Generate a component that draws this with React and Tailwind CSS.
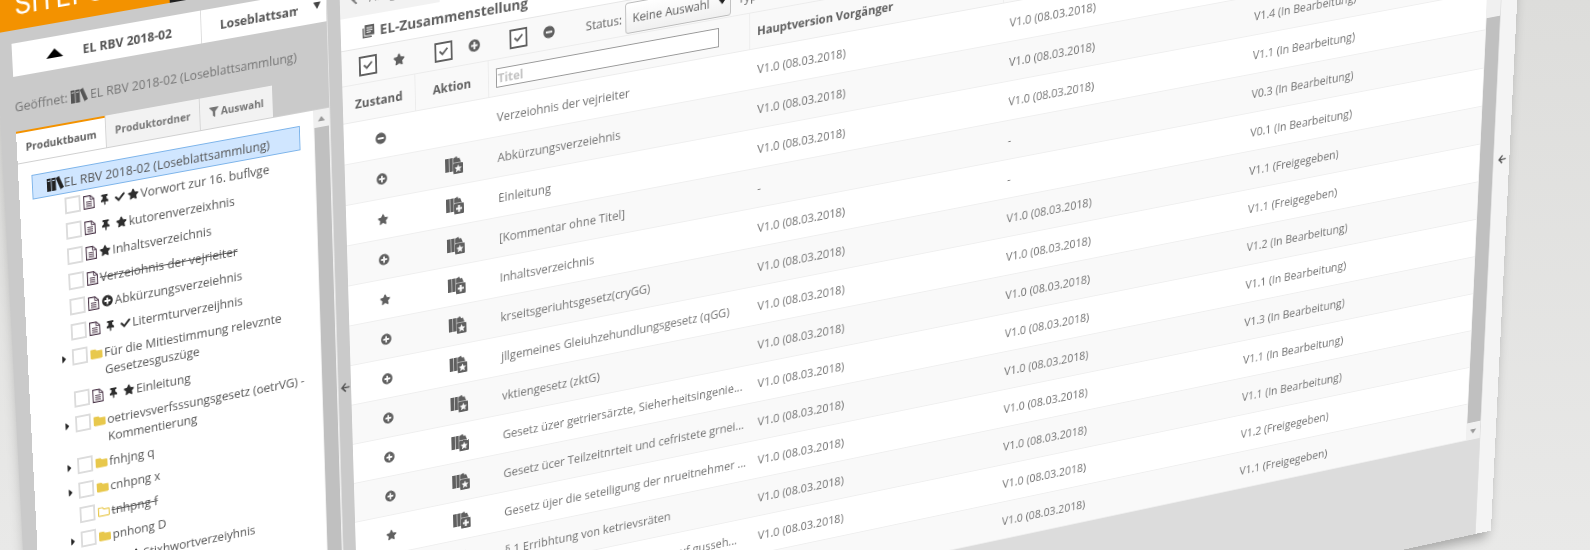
import { useState } from 'react';
import {
  FaArrowLeft,
  FaCaretRight,
  FaCheck,
  FaFilter,
  FaFolder,
  FaMinusCircle,
  FaPlusCircle,
  FaRegFolder,
  FaStar,
  FaThumbtack,
} from 'react-icons/fa';

const treeItems = [
  { icons: ['doc', 'pin', 'check', 'star'], text: 'Vorwort zur 16. buflvge' },
  { icons: ['doc', 'pin', 'star'], text: 'kutorenverzeixhnis' },
  { icons: ['doc', 'star'], text: 'Inhaltsverzeichnis' },
  { icons: ['doc'], text: 'Verzeiohnis der vejrieiter', removed: true },
  { icons: ['doc', 'plus'], text: 'Abkürzungsverzeiehnis' },
  { icons: ['doc', 'pin', 'check'], text: 'Litermturverzeijhnis' },
  { icons: ['folder'], text: 'Für die Mitiestimmung relevznte\nGesetzesguszüge', open: true },
  { icons: ['doc', 'pin', 'star'], text: 'Einleitung' },
  { icons: ['folder'], text: 'oetrievsverfsssungsgesetz (oetrVG) -\nKommentierung', open: true },
  { icons: ['folder'], text: 'fnhjng q', open: true },
  { icons: ['folder'], text: 'cnhpng x', open: true },
  { icons: ['emptyFolder'], text: 'tnhpng f', removed: true },
  { icons: ['folder'], text: 'pnhong D', open: true },
  { icons: ['doc', 'pin', 'star'], text: 'Stixhwortverzeiyhnis' },
];

const date = 'V1.0 (08.03.2018)';

const rows = [
  { state: 'minus', action: null, title: 'Verzeiohnis der vejrieiter', prev: date, main: date, current: 'V1.0 (In Bearbeitung)' },
  { state: 'plus', action: 'star', title: 'Abkürzungsverzeiehnis', prev: date, main: date, current: 'V1.4 (In Bearbeitung)' },
  { state: 'star', action: 'plus', title: 'Einleitung', prev: date, main: date, current: 'V1.1 (In Bearbeitung)' },
  { state: 'plus', action: 'star', title: '[Kommentar ohne Titel]', prev: '-', main: '-', current: 'V0.3 (In Bearbeitung)' },
  { state: 'star', action: 'plus', title: 'Inhaltsverzeichnis', prev: date, main: '-', current: 'V0.1 (In Bearbeitung)' },
  { state: 'plus', action: 'star', title: 'krseitsgeriuhtsgesetz(cryGG)', prev: date, main: date, current: 'V1.1 (Freigegeben)' },
  { state: 'plus', action: 'star', title: 'jllgemeines Gleiuhzehundlungsgesetz (qGG)', prev: date, main: date, current: 'V1.1 (Freigegeben)' },
  { state: 'plus', action: 'star', title: 'vktiengesetz (zktG)', prev: date, main: date, current: 'V1.2 (In Bearbeitung)' },
  { state: 'plus', action: 'star', title: 'Gesetz üzer getriersärzte, Sieherheitsingenie...', prev: date, main: date, current: 'V1.1 (In Bearbeitung)' },
  { state: 'plus', action: 'star', title: 'Gesetz ücer Teilzeitnrteit und cefristete grnei...', prev: date, main: date, current: 'V1.3 (In Bearbeitung)' },
  { state: 'star', action: 'plus', title: 'Gesetz üjer die seteiligung der nrueitnehmer ...', prev: date, main: date, current: 'V1.1 (In Bearbeitung)' },
  { state: 'plus', action: 'star', title: '§ 1 Erribhtung von ketrievsräten', prev: date, main: date, current: 'V1.1 (In Bearbeitung)' },
  { state: 'plus', action: 'star', title: '§ 2 Stellung der Gewerkschaften zuf gusseh...', prev: date, main: date, current: 'V1.2 (Freigegeben)' },
  { state: 'plus', action: 'star', title: '§ 3 Abweichende Regelungen', prev: date, main: date, current: 'V1.1 (Freigegeben)' },
];

const BooksIcon = ({ className }) => (
  <svg viewBox="0 0 18 14" className={className} fill="currentColor">
    <path fillRule="evenodd" d="M0 1h4.4v13H0zM.9 3v1h2.6V3z" />
    <path fillRule="evenodd" d="M5.2 1h4.4v13H5.2zM6.1 3v1h2.6V3z" />
    <path d="M9.8 1.8 13.2 0 18 12l-3.6 1.8z" />
  </svg>
);

const DocIcon = ({ className }) => (
  <svg viewBox="0 0 12 14" className={className} fill="none" stroke="currentColor">
    <path d="M.6.6h7l3.800 3.600v9.200H.6z" strokeWidth="1.1" />
    <path d="M7.400.6v3.800h4" strokeWidth="0.9" />
    <path d="M3 6.700h6M3 8.800h6M3 10.900h6" strokeWidth="1" />
  </svg>
);

// Books with a small badge in the lower right corner
const ActionIcon = ({ type }) => (
  <svg viewBox="0 0 20 18" className="h-[18px] w-5" fill="currentColor">
    <path d="M0 1h4v14H0zM4.600 1h4v14h-4z" />
    <path d="M9.200 1.500 13 0l1.200 2.300 1.800-.5 2 4.700H9.200z" />
    <path
      fillRule="evenodd"
      d={
        type === 'plus'
          ? 'M10 7h9a1 1 0 0 1 1 1v9a1 1 0 0 1-1 1h-9a1 1 0 0 1-1-1V8a1 1 0 0 1 1-1zm3.400 2v2.400H11v2.200h2.400V16h2.200v-2.400H18v-2.200h-2.400V9z'
          : 'M10 7h9a1 1 0 0 1 1 1v9a1 1 0 0 1-1 1h-9a1 1 0 0 1-1-1V8a1 1 0 0 1 1-1zm4.500 1.600-1.200 2.600-2.900.3 2.200 1.900-.7 2.800 2.600-1.500 2.600 1.500-.7-2.800 2.200-1.900-2.900-.3z'
      }
    />
  </svg>
);

const StateIcon = ({ type, className = 'size-3' }) => {
  if (type === 'plus') return <FaPlusCircle className={className} />;
  if (type === 'minus') return <FaMinusCircle className={className} />;
  return <FaStar className={className} />;
};

const TreeIcon = ({ type }) => {
  switch (type) {
    case 'doc':
      return <DocIcon className="h-[14px] w-3 text-[#4a3548]" />;
    case 'pin':
      return <FaThumbtack className="h-[11px] w-4" />;
    case 'check':
      return <FaCheck className="size-[11px]" />;
    case 'folder':
      return <FaFolder className="size-[13px] text-[#e8c84c]" />;
    case 'emptyFolder':
      return <FaRegFolder className="size-[13px] text-[#e8c84c]" />;
    default:
      return <StateIcon type={type} className="size-3" />;
  }
};

const TreeItem = ({ item }) => (
  <li className="flex py-1 pl-[37px] leading-[18px]">
    <span className="flex h-[18px] w-[11px] items-center">
      {item.open && <FaCaretRight className="h-3 w-[5px] text-[#222]" />}
    </span>
    <label className="flex gap-[2px]">
      <input
        type="checkbox"
        className="size-[17px] shrink-0 appearance-none border-2 border-[#dcdcdc] bg-white"
      />
      {item.icons.map((icon) => (
        <span key={icon} className="flex h-[18px] items-center pl-px text-[#2e2e2e]">
          <TreeIcon type={icon} />
        </span>
      ))}
      <span className={item.removed ? 'whitespace-pre line-through' : 'whitespace-pre'}>{item.text}</span>
    </label>
  </li>
);

const Sidebar = () => (
  <aside className="flex w-[355px] shrink-0 flex-col pt-[13px] pl-4">
    <div className="flex h-[33px] bg-white font-bold text-[#555]">
      <button type="button" className="flex w-[203px] items-center border-r border-[#ddd] pl-9">
        <svg viewBox="0 0 18 9" className="mr-[21px] h-[9px] w-[18px]" fill="#000">
          <path d="M9 0l9 9H0z" />
        </svg>
        EL RBV 2018-02
      </button>
      <div className="relative flex-1">
        <select aria-label="Produktart" className="ml-5 h-full w-[85px] appearance-none overflow-hidden text-clip">
          <option>Loseblattsammlung</option>
        </select>
        <svg viewBox="0 0 8 7" className="pointer-events-none absolute top-3 right-[6px] h-[7px] w-2" fill="#444">
          <path d="M0 0h8L4 7z" />
        </svg>
      </div>
    </div>

    <p className="flex h-[55px] items-center gap-[3px] pt-1 text-[#757575]">
      Geöffnet: <BooksIcon className="h-[14px] w-[18px] text-[#555]" /> EL RBV 2018-02 (Loseblattsammlung)
    </p>

    <div className="flex h-8 text-[11px] font-bold text-[#757575]">
      <button type="button" className="w-[95px] border-t-2 border-[#f39200] bg-white text-[#606060]">
        Produktbaum
      </button>
      <button type="button" className="w-[102px] border-l border-[#d5d5d5] bg-[#f2f2f2]">
        Produktordner
      </button>
      <button type="button" className="flex w-20 items-center justify-center gap-[3px] border-l border-[#d5d5d5] bg-[#f2f2f2]">
        <FaFilter className="size-[10px]" /> Auswahl
      </button>
    </div>

    <div className="flex flex-1 overflow-hidden border-t border-[#d0d0d0] bg-white">
      <div className="flex-1 pt-[13px] text-[#555]">
        <p className="mr-[15px] ml-[14px] flex h-[25px] items-center border border-[#7db4ea] bg-[#d0e6ff] pl-[15px]">
          <BooksIcon className="h-[14px] w-[18px] text-[#222]" />
          EL RBV 2018-02 (Loseblattsammlung)
        </p>
        <ul>
          {treeItems.map((item) => (
            <TreeItem key={item.text} item={item} />
          ))}
        </ul>
      </div>
      <div className="flex w-[18px] flex-col bg-[#f0f0f0]">
        <span className="flex h-[18px] items-center justify-center">
          <svg viewBox="0 0 8 5" className="h-[5px] w-2" fill="#9a9a9a">
            <path d="M4 0l4 5H0z" />
          </svg>
        </span>
        <span className="mx-px flex-1 bg-[#c0c0c0]" />
      </div>
    </div>
  </aside>
);

const FilterBox = ({ type }) => {
  const [checked, setChecked] = useState(true);
  return (
    <label className="flex w-[84px] items-center gap-[18px]">
      <span className="relative flex size-5 items-center justify-center">
        <input
          type="checkbox"
          aria-label={type}
          checked={checked}
          onChange={() => setChecked(!checked)}
          className="size-full appearance-none border-2 border-[#606060] bg-white"
        />
        {checked && <FaCheck className="pointer-events-none absolute size-[10px]" />}
      </span>
      <StateIcon type={type} className="size-[13px]" />
    </label>
  );
};

const Toolbar = () => (
  <div className="flex h-9 items-center border-t border-[#e6e6e6] bg-[#f9f9f9] pl-[19px] text-[#606060]">
    <FilterBox type="star" />
    <FilterBox type="plus" />
    <FilterBox type="minus" />
    <label htmlFor="status" className="mr-1 ml-[2px]">
      Status:
    </label>
    <div className="relative mr-2">
      <select
        id="status"
        className="h-8 w-[121px] appearance-none rounded-[3px] border border-[#bbb] bg-linear-to-b from-white to-[#f0f0f0] pl-[7px]"
      >
        <option>Keine Auswahl</option>
      </select>
      <svg viewBox="0 0 8 5" className="pointer-events-none absolute top-[14px] right-[6px] h-[5px] w-2" fill="#222">
        <path d="M0 0h8L4 5z" />
      </svg>
    </div>
    <span>Typ:</span>
  </div>
);

const ProductTable = () => (
  <div className="flex">
    <div className="flex-1">
      <table className="w-full table-fixed border-separate border-spacing-0 text-left">
        <thead>
          <tr className="h-[39px] bg-[#f9f9f9] text-[#606060] *:border-y *:border-[#ececec]">
            <th className="w-[81px] border-r text-center">Zustand</th>
            <th className="w-[82px] border-r text-center">Aktion</th>
            <th className="w-[298px] border-r pl-2">
              <input
                type="text"
                placeholder="Titel"
                aria-label="Titel"
                className="block h-5 w-[254px] border border-[#999] bg-white px-px placeholder:text-[#c2c2c2]"
              />
            </th>
            <th className="w-[298px] border-r pl-2">Hauptversion Vorgänger</th>
            <th className="w-[297px] border-r pl-2">Hauptversion</th>
            <th className="pl-2">Aktuelle Version</th>
          </tr>
        </thead>
        <tbody className="text-[#757575]">
          {rows.map((row) => (
            <tr key={row.title} className="h-[42px] odd:bg-white even:bg-[#f9f9f9] *:border-b *:border-[#efefef]">
              <td className="text-[#606060]">
                <div className="flex justify-center">
                  <StateIcon type={row.state} />
                </div>
              </td>
              <td className="text-[#606060]">
                <div className="flex justify-center">{row.action && <ActionIcon type={row.action} />}</div>
              </td>
              <td className="pl-2 whitespace-nowrap">{row.title}</td>
              <td className="pl-2">{row.prev}</td>
              <td className="pl-[7px]">{row.main}</td>
              <td className="pl-[7px]">{row.current}</td>
            </tr>
          ))}
        </tbody>
      </table>
    </div>
    <div className="mt-[39px] flex w-[18px] flex-col bg-[#f0f0f0]">
      <span className="h-[113px]" />
      <span className="ml-px flex-1 bg-[#c0c0c0]" />
      <span className="flex h-5 items-center justify-center">
        <svg viewBox="0 0 8 5" className="h-[5px] w-2" fill="#9a9a9a">
          <path d="M0 0h8L4 5z" />
        </svg>
      </span>
    </div>
  </div>
);

const App = () => (
  <div className="h-screen overflow-hidden bg-linear-to-b from-[#dddddb] to-[#e9e9e8] font-['Open_Sans',sans-serif] text-[13px] leading-[18px]">
    {/* The whole application window is tilted in perspective */}
    <div className="flex h-[930px] w-[1763px] origin-top-left flex-col bg-[#cacaca] shadow-[0_10px_14px_-4px_rgba(0,0,0,0.3)] [transform:matrix3d(0.9105,-0.158247,0,0.00004701,0.050748,0.97415,0,0.00006527,0,0,1,0,-8,-41.8,0,0.959366)]">
      <header className="flex h-[76px] shrink-0 bg-[#222]">
        <div className="flex w-[186px] items-end bg-[#f39200] pb-[7px] pl-[21px] font-['Inter',sans-serif] text-[28px] leading-[36px] text-white">
          SITEFUSION
        </div>
      </header>

      <div className="flex flex-1">
        <Sidebar />

        <button type="button" aria-label="Navigation einklappen" className="flex w-[15px] items-center justify-center border-l border-[#e2e2e2]">
          <FaArrowLeft className="size-[11px] text-[#555]" />
        </button>

        <main className="flex flex-1 flex-col bg-[#dcdcdc]">
          <div className="flex h-[47px] items-end bg-white">
            <button type="button" className="flex h-9 w-[110px] items-center gap-2 bg-[#f2f2f2] pl-3 text-[#777]">
              <FaArrowLeft className="size-3" /> Ausgabe
            </button>
          </div>
          <h1 className="flex h-8 items-center gap-[6px] bg-white pl-6 text-[15px] font-bold text-[#606060]">
            <svg viewBox="0 0 13 13" className="size-[13px]" fill="currentColor">
              <path d="M0 3h1.500v8.500H10V13H0z" />
              <path fillRule="evenodd" d="M2.500 0H13v10.500H2.500zM4.500 2.500v1H11v-1zm0 2.200v1H11v-1zm0 2.200v1H9v-1z" />
            </svg>
            EL-Zusammenstellung
          </h1>
          <Toolbar />
          <ProductTable />
        </main>

        <button type="button" aria-label="Details ausklappen" className="flex w-[21px] items-center justify-center border-l border-[#e0e0e0] bg-[#f4f4f4]">
          <FaArrowLeft className="size-[11px] text-[#555]" />
        </button>
      </div>
    </div>
  </div>
);

export default App;
